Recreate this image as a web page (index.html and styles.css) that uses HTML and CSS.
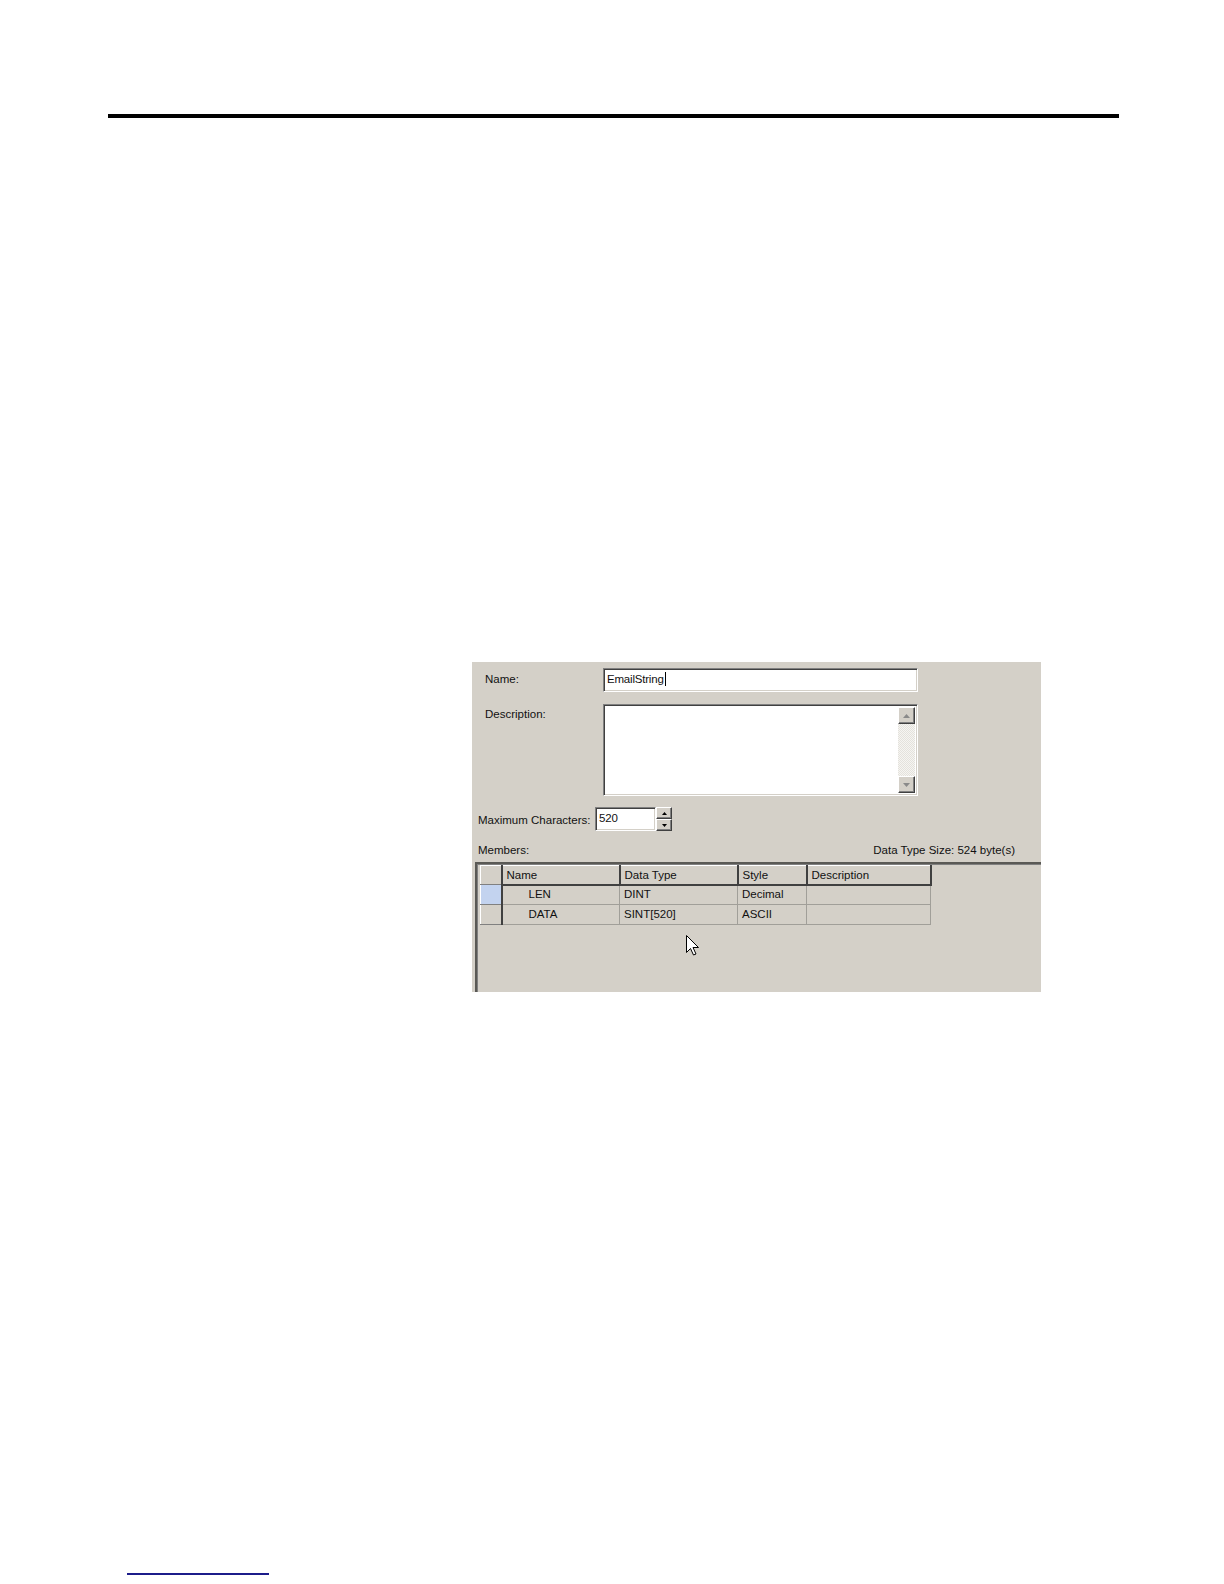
FILE: index.html
```html
<!DOCTYPE html>
<html>
<head>
<meta charset="utf-8">
<link rel="stylesheet" href="styles.css">
</head>
<body>
<div class="page">
  <div class="rule"></div>
  <div class="dialog">
    <div class="row row-name">
      <div class="label label-top">Name:</div>
      <div class="field name-field"><span class="field-text">EmailString</span><span class="caret"></span></div>
    </div>
    <div class="row row-desc">
      <div class="label label-top label-desc">Description:</div>
      <div class="field desc-field">
        <div class="desc-body"></div>
        <div class="vscroll">
          <div class="sbtn"><svg width="7" height="4" viewBox="0 0 7 4"><path d="M3.5 0 L7 4 L0 4 Z" fill="#8a8a8a"/></svg></div>
          <div class="strack"></div>
          <div class="sbtn"><svg width="7" height="4" viewBox="0 0 7 4"><path d="M0 0 L7 0 L3.5 4 Z" fill="#8a8a8a"/></svg></div>
        </div>
      </div>
    </div>
    <div class="row row-max">
      <div class="label label-max">Maximum Characters:</div>
      <div class="field max-field"><span class="field-text">520</span></div>
      <div class="spin">
        <div class="spin-btn"><svg width="5" height="3" viewBox="0 0 5 3"><path d="M2.5 0 L5 3 L0 3 Z" fill="#000"/></svg></div>
        <div class="spin-btn"><svg width="5" height="3" viewBox="0 0 5 3"><path d="M0 0 L5 0 L2.5 3 Z" fill="#000"/></svg></div>
      </div>
    </div>
    <div class="row row-members">
      <span>Members:</span>
      <span>Data Type Size: 524 byte(s)</span>
    </div>
    <div class="grid-area">
      <table class="grid">
        <thead>
          <tr>
            <th class="rh"></th>
            <th class="c-name">Name</th>
            <th class="c-type">Data Type</th>
            <th class="c-style">Style</th>
            <th class="c-desc">Description</th>
          </tr>
        </thead>
        <tbody>
          <tr>
            <td class="rh rh-sel"></td>
            <td class="indent">LEN</td>
            <td>DINT</td>
            <td>Decimal</td>
            <td></td>
          </tr>
          <tr>
            <td class="rh"></td>
            <td class="indent">DATA</td>
            <td>SINT[520]</td>
            <td>ASCII</td>
            <td></td>
          </tr>
        </tbody>
      </table>
      <svg class="cursor" width="15" height="23" viewBox="0 0 15 23">
        <path d="M1.5 1.5 L1.5 18.5 L5.5 14.5 L8.5 21 L11 20 L8 13.5 L13.5 13.5 Z" fill="#fff" stroke="#000" stroke-width="1"/>
      </svg>
    </div>
  </div>
  <div class="link-line"></div>
</div>
</body>
</html>
```

FILE: styles.css
```css
html, body {
  margin: 0;
  padding: 0;
  background: #ffffff;
}

.page {
  width: 1224px;
  height: 1584px;
  display: flex;
  flex-direction: column;
}

.rule {
  margin: 114px 0 0 108px;
  width: 1011px;
  height: 4px;
  background: #000;
}

.dialog {
  margin: 544px 0 0 472px;
  width: 569px;
  height: 330px;
  background: #d4d0c8;
  display: flex;
  flex-direction: column;
  font-family: "Liberation Sans", Arial, sans-serif;
  font-size: 11.5px;
  color: #111;
  box-sizing: border-box;
  padding-top: 6px;
}

.row {
  display: flex;
  align-items: center;
  white-space: nowrap;
}

.label-top {
  width: 118px;
  padding-left: 13px;
}

.row-name {
  height: 24px;
}

.row-name .label {
  padding-bottom: 3px;
}

.field {
  box-sizing: border-box;
  background: #fff;
  border-top: 1px solid #808080;
  border-left: 1px solid #808080;
  border-right: 1px solid #ffffff;
  border-bottom: 1px solid #ffffff;
  box-shadow: inset 1px 1px 0 #404040, inset -1px -1px 0 #d4d0c8;
}

.name-field {
  width: 315px;
  height: 24px;
  display: flex;
  align-items: center;
  padding: 0 0 2px 3px;
}

.field-text {
  letter-spacing: -0.2px;
}

.caret {
  display: inline-block;
  width: 1px;
  height: 14px;
  background: #000;
  margin-left: 1px;
}

.row-desc {
  margin-top: 12px;
  height: 92px;
  align-items: flex-start;
}

.label-desc {
  padding-top: 4px;
}

.desc-field {
  width: 315px;
  height: 92px;
  display: flex;
  padding: 2px;
}

.desc-body {
  flex: 1;
}

.vscroll {
  width: 17px;
  display: flex;
  flex-direction: column;
  background-color: #f0efeb;
  background-image: repeating-conic-gradient(#e4e2dc 0 25%, #f6f5f2 0 50%);
  background-size: 2px 2px;
}

.sbtn {
  width: 17px;
  height: 17px;
  box-sizing: border-box;
  background: #d4d0c8;
  border-top: 1px solid #ffffff;
  border-left: 1px solid #ffffff;
  border-right: 1px solid #404040;
  border-bottom: 1px solid #404040;
  box-shadow: inset -1px -1px 0 #808080;
  display: flex;
  align-items: center;
  justify-content: center;
}

.strack {
  flex: 1;
}

.row-max {
  margin-top: 11px;
  height: 24px;
}

.label-max {
  width: 117px;
  padding-left: 6px;
  padding-top: 2px;
}

.max-field {
  width: 61px;
  height: 24px;
  display: flex;
  align-items: center;
  padding: 0 0 3px 3px;
}

.spin {
  width: 16px;
  height: 24px;
  display: flex;
  flex-direction: column;
  box-sizing: border-box;
}

.spin-btn {
  height: 12px;
  box-sizing: border-box;
  background: #d4d0c8;
  border-top: 1px solid #ffffff;
  border-left: 1px solid #ffffff;
  border-right: 1px solid #404040;
  border-bottom: 1px solid #404040;
  box-shadow: inset -1px -1px 0 #808080;
  display: flex;
  align-items: center;
  justify-content: center;
}

.row-members {
  margin-top: 7px;
  height: 24px;
  padding: 0 26px 0 6px;
  justify-content: space-between;
}

.grid-area {
  position: relative;
  flex: 1;
  margin-left: 3px;
  border-top: 2px solid #5a5955;
  border-left: 2px solid #5a5955;
  box-shadow: inset 1px 1px 0 #808080;
  padding: 1px 0 0 3px;
}

.grid {
  border-collapse: collapse;
  table-layout: fixed;
  width: 450px;
}

.grid th,
.grid td {
  box-sizing: border-box;
  padding: 0 0 2px 4px;
  text-align: left;
  font-weight: normal;
  white-space: nowrap;
  overflow: hidden;
}

.grid th {
  height: 19px;
  background: #d4d0c8;
  border-top: 1px solid #ffffff;
  border-left: 1px solid #ffffff;
  border-right: 2px solid #404040;
  border-bottom: 2px solid #404040;
  padding-top: 2px;
}

.grid td {
  height: 20px;
  border: 1px solid #a19f99;
}

.grid .rh {
  width: 21px;
  padding: 0;
  background: #d4d0c8;
  border-top: 1px solid #ffffff;
  border-left: 1px solid #ffffff;
  border-right: 2px solid #404040;
  border-bottom: 1px solid #808080;
}

.grid td.rh-sel {
  background: #c3d3ef;
}

.c-name { width: 118px; }
.c-type { width: 118px; }
.c-style { width: 69px; }
.c-desc { width: 124px; }

.grid td.indent {
  padding-left: 26px;
}

.cursor {
  position: absolute;
  left: 208px;
  top: 70px;
}

.link-line {
  margin: 581px 0 0 127px;
  width: 142px;
  height: 2px;
  background: #1c1c8a;
}
```
